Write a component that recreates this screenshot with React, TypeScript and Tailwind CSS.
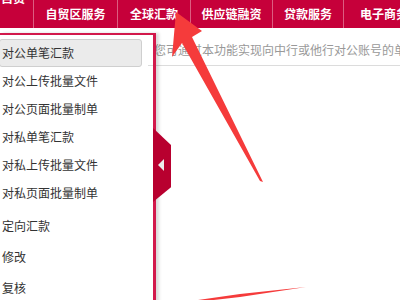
import React from "react";

const navItems = [
  { label: "自贸区服务", w: "w-[83px]" },
  { label: "全球汇款", w: "w-[72px]" },
  { label: "供应链融资", w: "w-[81px]" },
  { label: "贷款服务", w: "w-[70px]" },
  { label: "电子商务", w: "w-[80px]" },
];

const menuTop = ["对公单笔汇款", "对公上传批量文件", "对公页面批量制单", "对私单笔汇款", "对私上传批量文件", "对私页面批量制单"];
const menuBottom = ["定向汇款", "修改", "复核"];

const Separator = () => <div className="w-px h-full bg-[#dc5d80] shrink-0" />;

export default function App() {
  return (
    <div className="relative w-[400px] h-[300px] overflow-hidden bg-white font-['Noto_Sans_CJK_SC','Noto_Sans',sans-serif]">
      {/* top nav */}
      <div className="flex h-[28px] bg-[#c6003a] text-white text-[12px] font-bold whitespace-nowrap overflow-hidden">
        <div className="w-[33px] shrink-0 leading-none -mt-[8px] pl-[1px]">自贸</div>
        {navItems.map((item) => (
          <React.Fragment key={item.label}>
            <Separator />
            <div className={`${item.w} shrink-0 flex items-center justify-center pb-[1px]`}>{item.label}</div>
          </React.Fragment>
        ))}
      </div>

      <div className="flex mt-[5px]">
        {/* side menu */}
        <div className="relative w-[156px] h-[280px] shrink-0 border-t-2 border-r-[3px] border-[#d2184b] shadow-[3px_0_3px_rgba(0,0,0,0.15)] pt-[4px] text-[12px] text-[#333]">
          <div className="flex flex-col">
            {menuTop.map((m, i) => (
              <div
                key={m}
                className={
                  i === 0
                    ? "h-[28px] flex items-center pl-[2px] w-[143px] -ml-px bg-[#ebebeb] border border-[#cfcfcf] rounded-[3px]"
                    : "h-[28px] flex items-center pl-[2px]"
                }
              >
                {m}
              </div>
            ))}
            <div className="h-[3px]" />
            {menuBottom.map((m) => (
              <div key={m} className="h-[31px] flex items-center pl-[2px]">
                {m}
              </div>
            ))}
          </div>
          {/* collapse tab */}
          <div className="absolute left-[153px] top-[93px] w-[18px] h-[74px] bg-[#b8002f] [clip-path:polygon(0_0,100%_23%,100%_80%,0_100%)] flex items-center">
            <div className="ml-[5px] w-0 h-0 border-y-[6px] border-y-transparent border-r-[6px] border-r-[#ececec]" />
          </div>
        </div>

        {/* content */}
        <div className="flex-1 min-w-0">
          <div className="flex items-center h-[33px] -ml-[8px] border-b border-[#dcdcdc] whitespace-nowrap overflow-hidden">
            <div className="w-px h-[12px] bg-[#c8c8c8] mr-[6px] mt-[2px]" />
            <span className="text-[12px] text-[#999] mt-[1px]">您可通过本功能实现向中行或他行对公账号的单笔汇款</span>
          </div>
        </div>
      </div>

      {/* annotation arrows */}
      <svg className="absolute inset-0 pointer-events-none" width="400" height="300" viewBox="0 0 400 300">
        <polygon points="176,12 202,31 192,37 263,182 260,181 182,43 172,57" fill="#f53b3b" />
        <polygon points="198,300 240,294 306,287 240,297 205,301" fill="#f53b3b" />
      </svg>
    </div>
  );
}
